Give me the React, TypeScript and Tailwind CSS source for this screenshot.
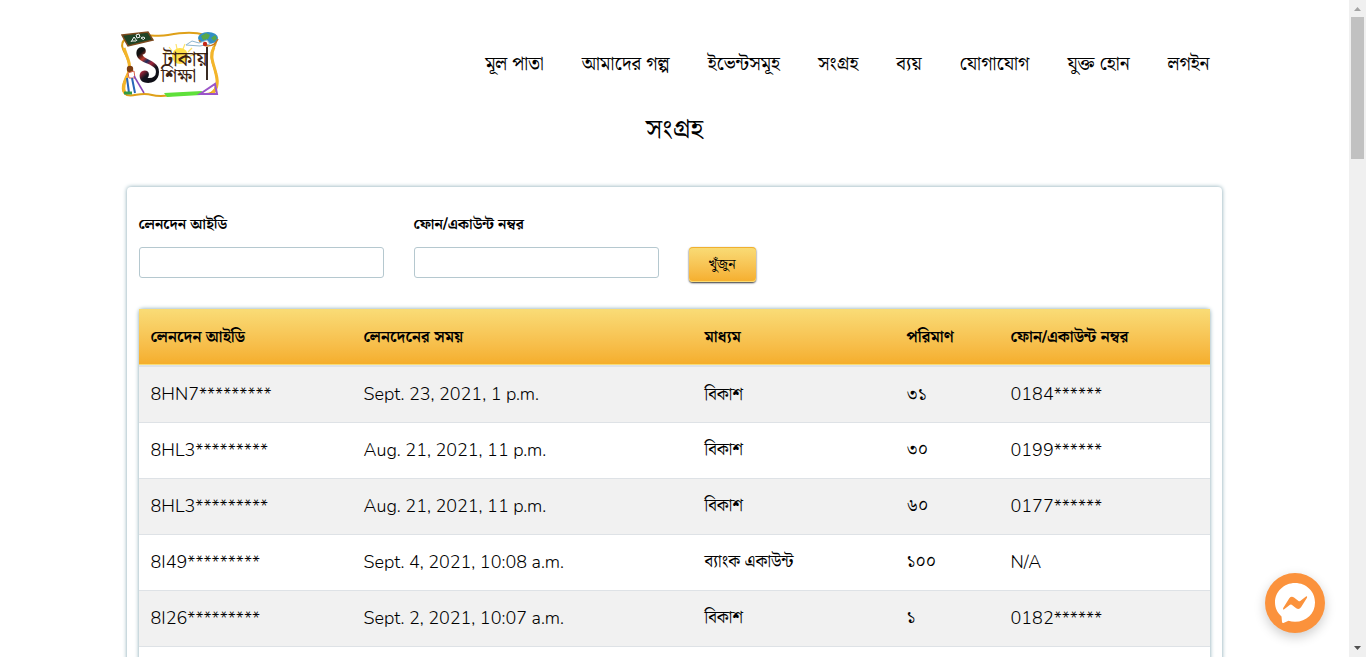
import React, { useState } from 'react';

interface Transaction {
  id: string;
  time: string;
  medium: string;
  amount: string;
  account: string;
}

const navLinks = ['মূল পাতা', 'আমাদের গল্প', 'ইভেন্টসমূহ', 'সংগ্রহ', 'ব্যয়', 'যোগাযোগ', 'যুক্ত হোন', 'লগইন'];

const transactions: Transaction[] = [
  { id: '8HN7*********', time: 'Sept. 23, 2021, 1 p.m.', medium: 'বিকাশ', amount: '৩১', account: '0184******' },
  { id: '8HL3*********', time: 'Aug. 21, 2021, 11 p.m.', medium: 'বিকাশ', amount: '৩০', account: '0199******' },
  { id: '8HL3*********', time: 'Aug. 21, 2021, 11 p.m.', medium: 'বিকাশ', amount: '৬০', account: '0177******' },
  { id: '8I49*********', time: 'Sept. 4, 2021, 10:08 a.m.', medium: 'ব্যাংক একাউন্ট', amount: '১০০', account: 'N/A' },
  { id: '8I26*********', time: 'Sept. 2, 2021, 10:07 a.m.', medium: 'বিকাশ', amount: '১', account: '0182******' },
];

const Logo: React.FC = () => (
  <svg viewBox="10 10 100 68" className="block w-[100px] h-[68px] overflow-visible" role="img" aria-label="১ টাকায় শিক্ষা">
    <defs>
      <linearGradient id="one" x1="0" y1="0" x2="0.3" y2="1">
        <stop offset="0" stopColor="#111" />
        <stop offset="0.4" stopColor="#111" />
        <stop offset="0.48" stopColor="#c0392b" />
        <stop offset="0.54" stopColor="#1d2b5a" />
        <stop offset="0.6" stopColor="#a3263a" />
        <stop offset="0.68" stopColor="#14141f" />
        <stop offset="1" stopColor="#000" />
      </linearGradient>
    </defs>
    {/* frame */}
    <path d="M16 19 C32 11 42 18 58 15 S86 12 94 15 C106 11 108 20 104 27 C98 37 104 44 106 54 C109 67 104 75 94 74 C76 70 58 79 42 75 C30 72 24 77 17 75 C9 71 14 62 18 54 C22 44 16 36 13 29 C11 24 12 21 16 19Z" fill="none" stroke="#dfa018" strokeWidth="2" />
    <path d="M14 28 C17 38 22 44 18 54 C14 62 12 68 15 73 M104 27 C99 37 104 44 106 54 C109 64 106 71 102 73" fill="none" stroke="#f3b52b" strokeWidth="3" />
    {/* sun */}
    <g stroke="#fde26a" strokeWidth="1.2">
      <path d="M60 35 L55 32 M62 31 L59 27 M67 29 L66 24 M73 29 L75 24 M78 32 L82 28 M80 36 L86 34" />
      <circle cx="70" cy="36" r="8" fill="#ffe04a" stroke="none" />
    </g>
    {/* blackboard */}
    <path d="M12 15 L38 12 L43 20 L18 26Z" fill="#204426" stroke="#7c4a1e" strokeWidth="1.5" />
    <path d="M21 22 L24 17 L27 21 M22 21 h4 M26 15 l3 -1 1 3 -3 1z M31 18 q2 -2 4 0 q-1 3 -4 0" fill="none" stroke="#f4f4f4" strokeWidth="1" />
    {/* globe and book */}
    <ellipse cx="98" cy="18" rx="10" ry="6" fill="#318fc7" />
    <path d="M91 16 l5 -3 4 2 -2 4 -5 1z M101 18 l4 -3 2 3 -3 3z" fill="#58a848" />
    <path d="M89 20 C93 28 104 28 108 19" fill="none" stroke="#c4761f" strokeWidth="1.5" />
    <path d="M76 25 L82 21 L89 23 L97 20 L100 24 L90 26Z" fill="#fff" stroke="#8cb5ce" strokeWidth="1" />
    <circle cx="95" cy="24" r="2.2" fill="#c32818" />
    {/* pencil cup */}
    <circle cx="20" cy="49" r="3.2" fill="#7a3b12" />
    <path d="M18 53 L24 51 L25 58 L19 58Z" fill="#fff" stroke="#d9604a" strokeWidth="1" />
    <path d="M17 58 L19 73 M22 58 L25 73" stroke="#2866b8" strokeWidth="2" />
    <path d="M24 56 L34 73" stroke="#8745b5" strokeWidth="1.5" />
    <path d="M14 73 h8" stroke="#329b45" strokeWidth="3" />
    {/* ruler and set square */}
    <path d="M54 73 L92 71 L91 75 L57 77Z" fill="#5ee03a" />
    <path d="M90 74 L105 64 L107 74Z" fill="none" stroke="#9b55c8" strokeWidth="2" />
    <text x="22" y="63" fontSize="57" fontWeight="500" fill="url(#one)" fontFamily="'Noto Serif Bengali', 'Noto Sans Bengali', sans-serif">১</text>
    <text x="53" y="46" fontSize="20" fontWeight="500" fill="#3b2111" fontFamily="'Noto Serif Bengali', 'Noto Sans Bengali', sans-serif">টাকায়</text>
    <text x="51" y="62" fontSize="19" fontWeight="500" fill="#3b2111" fontFamily="'Noto Serif Bengali', 'Noto Sans Bengali', sans-serif">শিক্ষা</text>
    <path d="M97 27 V60" stroke="#24150c" strokeWidth="1.8" />
  </svg>
);

const Header: React.FC = () => (
  <header className="flex items-center justify-between pt-[30px]">
    <a href="#home">
      <Logo />
    </a>
    <nav className="flex gap-[38px] pr-5 text-[19px] font-normal">
      {navLinks.map(link => (
        <a key={link} href="#nav" className="whitespace-nowrap">{link}</a>
      ))}
    </nav>
  </header>
);

const inputClass = 'block w-[245px] h-[31px] px-2 bg-white border border-[#b5c8cf] rounded-[3px] outline-none';
const labelClass = 'block mb-[11px] leading-6 text-[15px] font-bold';
const bengaliCell = 'px-3 text-[17px] font-normal';

const SearchForm: React.FC = () => {
  const [transactionId, setTransactionId] = useState('');
  const [account, setAccount] = useState('');

  return (
    <form onSubmit={e => e.preventDefault()} className="flex items-end gap-[30px]">
      <div>
        <label htmlFor="transaction-id" className={labelClass}>লেনদেন আইডি</label>
        <input id="transaction-id" type="text" value={transactionId} onChange={e => setTransactionId(e.target.value)} className={inputClass} />
      </div>
      <div>
        <label htmlFor="account" className={labelClass}>ফোন/একাউন্ট নম্বর</label>
        <input id="account" type="text" value={account} onChange={e => setAccount(e.target.value)} className={inputClass} />
      </div>
      <button type="submit" className="-mb-1 w-[67px] h-[35px] rounded-[4px] text-[14px] font-normal bg-linear-to-b from-[#f9dc76] to-[#f5ae2b] shadow-[0_1px_2px_#333,inset_0_1px_0_#f0b02f,inset_0_-1px_0_#fbdc74]">খুঁজুন</button>
    </form>
  );
};

const TransactionTable: React.FC = () => (
  <table className="w-full mt-[31px] table-fixed border-collapse rounded-t-[4px] text-left shadow-[0_0_4px_#7fa3b0]">
    <colgroup>
      <col className="w-[213px]" />
      <col className="w-[341px]" />
      <col className="w-[202px]" />
      <col className="w-[104px]" />
      <col />
    </colgroup>
    <thead>
      <tr className="h-[57px] bg-linear-to-b from-[#f9dc76] to-[#f5ae2b] border-b-2 border-[#dee2e6] text-[16px]">
        <th className="px-3">লেনদেন আইডি</th>
        <th className="px-3">লেনদেনের সময়</th>
        <th className="px-3">মাধ্যম</th>
        <th className="px-3">পরিমাণ</th>
        <th className="px-3">ফোন/একাউন্ট নম্বর</th>
      </tr>
    </thead>
    <tbody>
      {transactions.map((t, i) => (
        <tr key={i} className="h-14 border-b border-[#dee2e6] odd:bg-[#f1f1f1] bg-white">
          <td className="px-3">{t.id}</td>
          <td className="px-3">{t.time}</td>
          <td className={bengaliCell}>{t.medium}</td>
          <td className={bengaliCell}>{t.amount}</td>
          <td className="px-3">{t.account}</td>
        </tr>
      ))}
      <tr className="h-14 bg-white">
        <td colSpan={5}></td>
      </tr>
    </tbody>
  </table>
);

const Scrollbar: React.FC = () => (
  <div className="w-[17px] shrink-0 h-full flex flex-col items-center bg-[#f0f0f0]">
    <svg viewBox="0 0 17 17" className="w-[17px] h-[17px]"><path d="M5 11 L8.500 7 L12 11Z" fill="#a3a3a3" /></svg>
    <div className="w-[13px] h-[142px] bg-[#c1c1c1]"></div>
    <svg viewBox="0 0 17 17" className="mt-auto w-[17px] h-[17px]"><path d="M5 6 L8.500 10 L12 6Z" fill="#505050" /></svg>
  </div>
);

const ChatButton: React.FC = () => (
  <button type="button" aria-label="Messenger" className="fixed right-[41px] bottom-6 w-[60px] h-[60px] rounded-full bg-[#fb923c] shadow-[0_4px_12px_rgba(0,0,0,0.2)]">
    <svg viewBox="0 0 60 60" className="block w-full h-full">
      <path d="M30 10 C19 10 10 18.500 10 29.500 C10 35 12.500 40 16.500 43.500 L17 49 Q17.200 50.500 19 49.800 L23.500 47.700 C25.500 48.400 27.700 48.800 30 48.800 C41.500 48.800 50 40.500 50 29.500 C50 18.500 41.500 10 30 10Z" fill="#fff" />
      <path d="M18.200 35 L24.300 25.300 Q26.300 22.800 29 24.500 L33.500 27.900 Q34.300 28.400 35.200 27.900 L41 23.500 Q42.600 22.700 42 24.800 L36 34.300 Q34 37 31.200 35.200 L26.700 31.800 Q25.900 31.300 25 31.800 L19.200 36.300 Q17.500 37.200 18.200 35Z" fill="#fb923c" />
    </svg>
  </button>
);

export default function App() {
  return (
    <div className="flex h-screen overflow-hidden bg-white text-black text-[18px] font-light font-['Nunito','Lato','Noto_Serif_Bengali','Noto_Sans_Bengali',sans-serif]">
      <main className="flex-1 min-w-0">
        <div className="max-w-[1110px] mx-auto">
          <Header />
          <h1 className="mt-3 leading-10 text-[27px] font-normal text-center">সংগ্রহ</h1>
          <section className="ml-[7px] mr-2 mt-[37px] px-3 pt-[25px] pb-6 rounded-[4px] shadow-[0_0_4px_#7fa3b0]">
            <SearchForm />
            <TransactionTable />
          </section>
        </div>
      </main>
      <Scrollbar />
      <ChatButton />
    </div>
  );
}
